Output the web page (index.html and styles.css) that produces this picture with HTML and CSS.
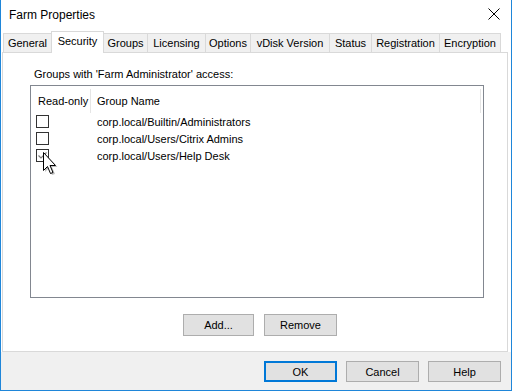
FILE: index.html
```html
<!DOCTYPE html>
<html>
<head>
<meta charset="utf-8">
<link rel="stylesheet" href="styles.css">
</head>
<body>
<div class="window">
  <div class="titlebar">
    <span class="title">Farm Properties</span>
    <svg class="close" width="12" height="12" viewBox="0 0 12 12"><path d="M0.5 0.5 L11.5 11.5 M11.5 0.5 L0.5 11.5" stroke="#000" stroke-width="1" fill="none"/></svg>
  </div>
  <div class="tabs">
    <div class="tab t-general">General</div>
    <div class="tab t-security active">Security</div>
    <div class="tab t-groups">Groups</div>
    <div class="tab t-licensing">Licensing</div>
    <div class="tab t-options">Options</div>
    <div class="tab t-vdisk">vDisk Version</div>
    <div class="tab t-status">Status</div>
    <div class="tab t-registration">Registration</div>
    <div class="tab t-encryption">Encryption</div>
  </div>
  <div class="panel">
    <div class="label">Groups with 'Farm Administrator' access:</div>
    <div class="list">
      <div class="list-head">
        <div class="hcol1">Read-only</div>
        <div class="hcol2">Group Name</div>
      </div>
      <div class="row"><div class="cell1"><span class="cb"></span></div><div class="cell2">corp.local/Builtin/Administrators</div></div>
      <div class="row"><div class="cell1"><span class="cb"></span></div><div class="cell2">corp.local/Users/Citrix Admins</div></div>
      <div class="row"><div class="cell1"><span class="cb checked"><svg width="11" height="11" viewBox="0 0 11 11"><path d="M1.5 5.5 L4 8 L9.5 2.5" stroke="#7a7a7a" stroke-width="1.2" fill="none"/></svg></span></div><div class="cell2">corp.local/Users/Help Desk</div></div>
      <svg class="cursor" width="18" height="26" viewBox="0 0 18 26">
        <path d="M3 3 L3 21 L7 17 L10 24 L13 23 L10 16 L15.5 16 Z" fill="rgba(0,0,0,0.25)"/>
        <path d="M1.5 1.5 L1.5 19.5 L5.5 15.5 L8.5 22.5 L11 21.5 L8 14.5 L13.5 14.5 Z" fill="#fff" stroke="#000" stroke-width="1" stroke-linejoin="miter"/>
      </svg>
    </div>
    <div class="actions">
      <button class="btn">Add...</button>
      <button class="btn">Remove</button>
    </div>
  </div>
  <div class="footer">
    <button class="btn primary">OK</button>
    <button class="btn">Cancel</button>
    <button class="btn">Help</button>
  </div>
</div>
</body>
</html>
```
FILE: styles.css
```css
* { box-sizing: border-box; }
html, body { margin: 0; padding: 0; background: #fff; }
body { font-family: "Liberation Sans", Arial, sans-serif; font-size: 11px; color: #000; }

.window {
  width: 512px;
  height: 391px;
  border: 1px solid #1f86d9;
  border-top: 0;
  display: flex;
  flex-direction: column;
  background: #fff;
}

.titlebar {
  height: 31px;
  display: flex;
  align-items: center;
  justify-content: space-between;
  padding: 0 11px 2px 8px;
  flex: none;
}
.title { font-size: 12px; color: #000; }
.close { display: block; margin-top: -1px; }

.tabs {
  height: 21px;
  display: flex;
  align-items: flex-end;
  padding-left: 2px;
  flex: none;
}
.tab {
  height: 19px;
  border: 1px solid #d9d9d9;
  border-bottom: 0;
  background: #f0f0f0;
  text-align: center;
  line-height: 18px;
  font-size: 11px;
  margin-left: -1px;
  white-space: nowrap;
}
.tab:first-child { margin-left: 0; }
.tab.active {
  height: 22px;
  margin-bottom: -1px;
  background: #fff;
  position: relative;
  z-index: 1;
  line-height: 19px;
}
.t-general { width: 49px; }
.t-security { width: 53px; }
.t-groups { width: 45px; }
.t-licensing { width: 59px; }
.t-options { width: 46px; }
.t-vdisk { width: 80px; }
.t-status { width: 43px; }
.t-registration { width: 69px; }
.t-encryption { width: 62px; }

.panel {
  height: 300px;
  width: 506px;
  margin-left: 1px;
  border: 1px solid #d9d9d9;
  padding: 14px 0 0 27px;
  display: flex;
  flex-direction: column;
  flex: none;
}
.label { line-height: 14px; margin-left: 4px; }

.list {
  position: relative;
  margin-top: 4px;
  width: 454px;
  height: 213px;
  border: 1px solid #828790;
  flex: none;
}
.list-head {
  height: 27px;
  display: flex;
  align-items: center;
}
.hcol1 {
  width: 60px;
  padding-left: 7px;
  border-right: 1px solid #e5e5e5;
  height: 24px;
  line-height: 24px;
  margin-top: 2px;
}
.hcol2 {
  width: 390px;
  padding-left: 6px;
  border-right: 1px solid #e5e5e5;
  height: 24px;
  line-height: 24px;
  margin-top: 2px;
}
.row {
  height: 17px;
  display: flex;
  align-items: center;
}
.cell1 { width: 60px; padding-left: 5px; display: flex; align-items: center; }
.cell2 { padding-left: 6px; line-height: 14px; }
.cb {
  width: 13px;
  height: 13px;
  border: 1px solid #333;
  background: #fff;
  display: block;
}
.cb svg { display: block; }
.cursor {
  position: absolute;
  left: 11px;
  top: 65px;
}

.actions {
  display: flex;
  gap: 10px;
  margin-top: 16px;
  padding-left: 153px;
}
.btn {
  font-family: "Liberation Sans", Arial, sans-serif;
  font-size: 11px;
  color: #000;
  background: #e1e1e1;
  border: 1px solid #adadad;
  padding: 0;
  margin: 0;
  height: 22px;
}
.actions .btn:first-child { width: 71px; }
.actions .btn:last-child { width: 73px; }

.footer {
  flex: 1;
  background: #f0f0f0;
  display: flex;
  justify-content: flex-end;
  gap: 9px;
  padding: 9px 10px 0 0;
}
.footer .btn { width: 73px; height: 21px; }
.footer .btn.primary { border: 2px solid #0078d7; }
```
